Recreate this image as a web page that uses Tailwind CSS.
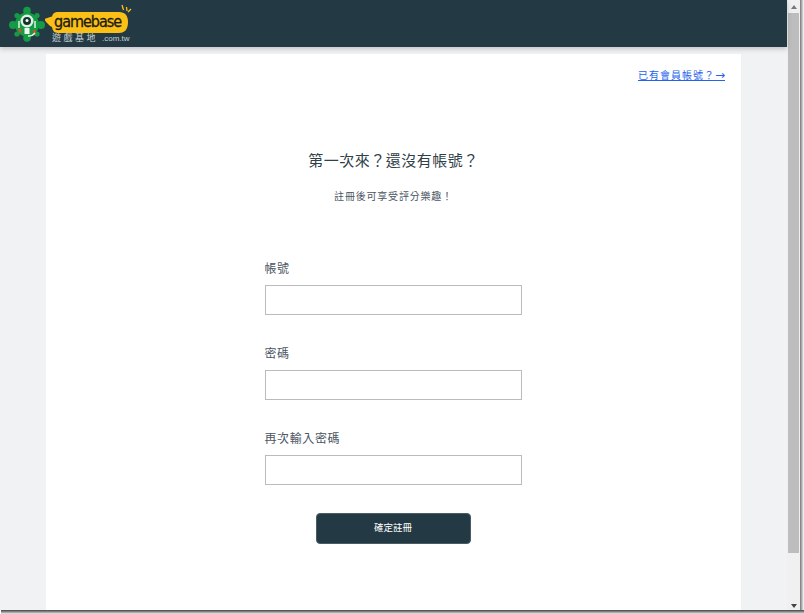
<!DOCTYPE html>
<html lang="zh-Hant">
  <head>
    <meta charset="UTF-8" />
    <meta name="viewport" content="width=device-width, initial-scale=1.0" />
    <title>gamebase 註冊</title>
    <script src="https://cdn.jsdelivr.net/npm/@tailwindcss/browser@4"></script>
  </head>
  <body class="bg-white h-[614px] w-[804px] overflow-hidden font-['Liberation_Sans','Noto_Sans_CJK_TC',sans-serif]">
    <div class="flex flex-col h-[614px]">
      <div class="flex flex-1 min-h-0">
        <div class="w-[787px] bg-[#f1f2f4] flex flex-col">
          <header class="relative h-[47px] bg-[#233a44] shadow-[0_2px_5px_rgba(0,0,0,0.2)] flex items-start pl-[9px] pt-[6px] shrink-0">
            <svg width="36" height="37" viewBox="0 0 36 37">
              <g fill="#149c45">
                <circle cx="18" cy="4.500" r="3.800" />
                <circle cx="18" cy="32" r="3.800" />
                <circle cx="4" cy="19" r="4" />
                <circle cx="32" cy="19" r="4" />
                <circle cx="8" cy="9.500" r="2.600" />
                <circle cx="28" cy="9.500" r="2.600" />
                <circle cx="8" cy="28" r="2.600" />
                <circle cx="28" cy="28" r="2.600" />
                <circle cx="18" cy="18.500" r="12" />
              </g>
              <circle cx="18" cy="15" r="6.500" fill="#dff0e4" />
              <circle cx="18" cy="15" r="4" fill="#12352a" />
              <circle cx="18" cy="14.500" r="1.500" fill="#ffffff" />
              <path d="M15.500 22h5v6h-5z" fill="#eef6f0" />
              <path d="M10 15v7M26 15v7" stroke="#dff0e4" stroke-width="1.500" fill="none" />
              <path d="M11 23v3.500" stroke="#e0492f" stroke-width="2.500" fill="none" />
              <path d="M25.500 24v3" stroke="#e0492f" stroke-width="2.500" fill="none" />
              <path d="M26 27c-2 2.500-4 3.200-7 3" stroke="#e8efe9" stroke-width="1.300" fill="none" />
            </svg>
            <div class="flex flex-col items-start mt-[5px]">
              <div class="relative h-[22px] w-[84px]">
                <svg class="absolute left-0 top-0" width="84" height="22" viewBox="0 0 84 22">
                  <path d="M-1 8L7 5.500C8 2 10 1 13 1H74C80 1 83 4.500 83 11C83 18 80 22 74 22H13C9 22 7.500 19 7 16C4 14.500 1 11 -1 8Z" fill="#fbc016" />
                </svg>
                <span class="absolute left-[9px] top-[1px] text-[16px] leading-[19px] text-[#1c1a12] font-['DejaVu_Sans_Condensed','DejaVu_Sans',sans-serif] font-stretch-condensed tracking-[-1px] [-webkit-text-stroke:0.3px_#1c1a12]">gamebase</span>
              </div>
              <div class="flex items-center pl-[7px] h-[9px] mt-[1px] text-[#c9d1d4]">
                <span class="text-[9px] leading-none tracking-[2.500px]">遊戲基地</span>
                <span class="text-[8px] leading-none ml-[4px]">.com.tw</span>
              </div>
            </div>
            <svg class="absolute left-[120px] top-[4px]" width="12" height="10" viewBox="0 0 12 10">
              <path d="M2 1l1.500 5M6.500 3l.5 4M11 5L8 8" stroke="#fbc016" stroke-width="1.300" fill="none" />
            </svg>
          </header>

          <main class="w-[695px] ml-[46px] mt-[7px] flex-1 bg-white flex flex-col items-center">
            <div class="w-full flex justify-end pr-[16px] pt-[13px]">
              <a href="#" class="text-[10px] leading-[16px] text-[#2563eb] underline tracking-[1px]">已有會員帳號？<span class="text-[12px] tracking-normal font-['DejaVu_Sans']">→</span></a>
            </div>
            <h1 class="mt-[65px] text-[15px] leading-[24px] text-[#2f4048] tracking-[0.5px] font-normal">第一次來？還沒有帳號？</h1>
            <p class="mt-[16px] text-[10px] leading-[16px] text-[#4b5563] tracking-[0.8px]">註冊後可享受評分樂趣！</p>

            <form class="w-[257px] mt-[55px] mr-[1px] flex flex-col">
              <label class="text-[12px] leading-[18px] text-[#4b5563] tracking-[0.6px]">帳號</label>
              <input type="text" class="mt-[7px] h-[30px] border border-[#bbbbbb] bg-white" />
              <label class="mt-[30px] text-[12px] leading-[18px] text-[#4b5563] tracking-[0.6px]">密碼</label>
              <input type="password" class="mt-[7px] h-[30px] border border-[#bbbbbb] bg-white" />
              <label class="mt-[30px] text-[12px] leading-[18px] text-[#4b5563] tracking-[0.6px]">再次輸入密碼</label>
              <input type="password" class="mt-[7px] h-[30px] border border-[#bbbbbb] bg-white" />
              <button type="button" class="mt-[28px] mx-auto w-[155px] h-[31px] rounded-[4px] bg-[#233a44] border border-[#4a5c64] text-white text-[9.500px]">確定註冊</button>
            </form>
          </main>
        </div>

        <div class="w-[13px] bg-[#f0f0f0] flex flex-col items-center">
          <div class="w-full h-[13px] flex items-center justify-center">
            <div class="w-0 h-0 border-x-[3px] border-x-transparent border-b-[4px] border-b-[#777]"></div>
          </div>
          <div class="w-[11px] h-[540px] bg-[#bdbdbd]"></div>
          <div class="mt-auto mb-[2px] w-0 h-0 border-x-[3px] border-x-transparent border-t-[4px] border-t-[#444]"></div>
        </div>
        <div class="w-[4px] bg-gradient-to-r from-[#777] to-[#fff]"></div>
      </div>
      <div class="h-[4px] ml-[1px] bg-gradient-to-b from-[#444] to-[#eee]"></div>
    </div>
  </body>
</html>
